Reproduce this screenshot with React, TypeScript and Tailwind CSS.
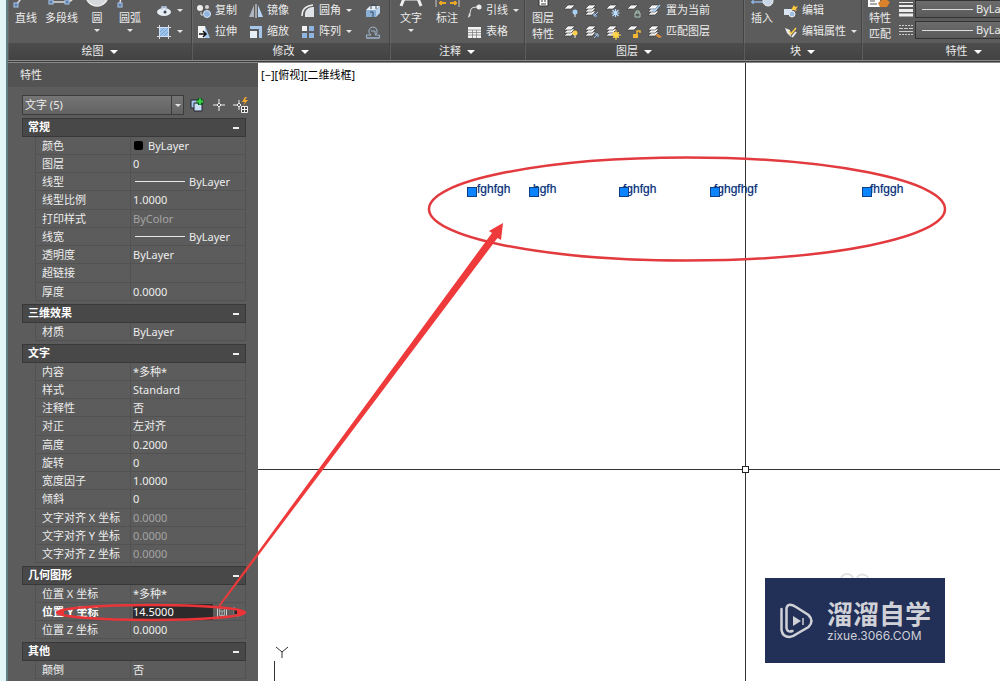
import { useState } from "react";
import type { ReactNode } from "react";

type Property = {
  name: string;
  value: string;
  kind?: "swatch" | "line" | "edit";
  readOnly?: boolean;
};

type Section = {
  title: string;
  rows: Property[];
};

const SECTIONS: Section[] = [
  {
    title: "常规",
    rows: [
      { name: "颜色", value: "ByLayer", kind: "swatch" },
      { name: "图层", value: "0" },
      { name: "线型", value: "ByLayer", kind: "line" },
      { name: "线型比例", value: "1.0000" },
      { name: "打印样式", value: "ByColor", readOnly: true },
      { name: "线宽", value: "ByLayer", kind: "line" },
      { name: "透明度", value: "ByLayer" },
      { name: "超链接", value: "" },
      { name: "厚度", value: "0.0000" },
    ],
  },
  { title: "三维效果", rows: [{ name: "材质", value: "ByLayer" }] },
  {
    title: "文字",
    rows: [
      { name: "内容", value: "*多种*" },
      { name: "样式", value: "Standard" },
      { name: "注释性", value: "否" },
      { name: "对正", value: "左对齐" },
      { name: "高度", value: "0.2000" },
      { name: "旋转", value: "0" },
      { name: "宽度因子", value: "1.0000" },
      { name: "倾斜", value: "0" },
      { name: "文字对齐 X 坐标", value: "0.0000", readOnly: true },
      { name: "文字对齐 Y 坐标", value: "0.0000", readOnly: true },
      { name: "文字对齐 Z 坐标", value: "0.0000", readOnly: true },
    ],
  },
  {
    title: "几何图形",
    rows: [
      { name: "位置 X 坐标", value: "*多种*" },
      { name: "位置 Y 坐标", value: "14.5000", kind: "edit" },
      { name: "位置 Z 坐标", value: "0.0000" },
    ],
  },
  { title: "其他", rows: [{ name: "颠倒", value: "否" }] },
];

// Text entities on the drawing, in canvas coordinates
const ENTITIES = [
  { text: "fghfgh", grip: 209, x: 219 },
  { text: "hgfh", grip: 271, x: 275 },
  { text: "fghfgh", grip: 361, x: 365 },
  { text: "fghgfhgf", grip: 452, x: 456 },
  { text: "fhfggh", grip: 604, x: 612 },
];

function Icon({ children }: { children: ReactNode }) {
  return (
    <svg viewBox="0 0 16 16" className="h-4 w-4 shrink-0" fill="none" aria-hidden="true">
      {children}
    </svg>
  );
}

function Caret() {
  return <span className="border-x-[3px] border-t-[3px] border-x-transparent border-t-[#e4e4e4]" />;
}

function Sheets({ count = 3, children }: { count?: number; children?: ReactNode }) {
  return (
    <Icon>
      {count > 2 && <path d="M1 12h7l4-4H5z" fill="#eee" stroke="#333" strokeWidth=".6" />}
      {count > 1 && <path d="M1 9h7l4-4H5z" fill="#eee" stroke="#333" strokeWidth=".6" />}
      <path d="M1 6h7l4-4H5z" fill="#f6f6f6" stroke="#333" strokeWidth=".6" />
      {children}
    </Icon>
  );
}

function SmallTool({ icon, label, caret = false }: { icon: ReactNode; label?: string; caret?: boolean }) {
  return (
    <button type="button" className="flex h-[21px] items-center gap-[3px] whitespace-nowrap">
      {icon}
      {label}
      {caret && (
        <span className="ml-[2px] flex">
          <Caret />
        </span>
      )}
    </button>
  );
}

function BigTool({ icon, lines, caret = false }: { icon: ReactNode; lines: string[]; caret?: boolean }) {
  return (
    <button type="button" className="flex shrink-0 flex-col items-center whitespace-nowrap">
      <svg viewBox="0 0 28 10" className="h-[10px] w-7" fill="none" aria-hidden="true">
        {icon}
      </svg>
      {lines.map((line) => (
        <span key={line} className="leading-4">
          {line}
        </span>
      ))}
      {caret && (
        <span className="mt-[3px] flex">
          <Caret />
        </span>
      )}
    </button>
  );
}

function RibbonGroup({ title, className, children }: { title: string; className: string; children: ReactNode }) {
  return (
    <section className={`flex shrink-0 flex-col border-r border-[#444] ${className}`}>
      <div className="flex h-[43px] items-start overflow-hidden bg-[#5c5c5c] shadow-[inset_1px_0_0_#6a6a6a]">
        {children}
      </div>
      <button
        type="button"
        className="flex h-[17px] items-center justify-center gap-[6px] bg-linear-to-b from-[#4c4c4c] to-[#434343] shadow-[inset_1px_0_0_#5c5c5c]"
      >
        {title}
        <span className="border-x-4 border-t-4 border-x-transparent border-t-white" />
      </button>
    </section>
  );
}

function StyleSelect({ label }: { label: string }) {
  return (
    <div className="relative h-[18px] w-[148px] border border-[#333] bg-linear-to-b from-[#6c6c6c] to-[#5a5a5a]">
      <span className="pointer-events-none absolute top-2 left-[6px] h-px w-[51px] bg-[#ddd]" />
      <select aria-label={label} className="h-4 w-full appearance-none bg-transparent pl-[60px] leading-4 outline-none">
        <option>ByLayer</option>
      </select>
    </div>
  );
}

function Ribbon() {
  return (
    <header className="flex h-[63px] overflow-hidden border-b-3 border-double border-[#8a8a8a] bg-[#3d3d3d]">
      <RibbonGroup title="绘图" className="w-[184px]">
        <div className="flex gap-[5px] pl-1">
          <BigTool
            lines={["直线"]}
            icon={
              <>
                <path d="M4 5 12-5" stroke="#ddd" strokeWidth="1.5" />
                <rect x="2" y="3" width="4" height="4" fill="#5b7fae" stroke="#a9c6ea" />
              </>
            }
          />
          <BigTool
            lines={["多段线"]}
            icon={
              <>
                <path d="M3 2h15q9-1 5-6" stroke="#ddd" strokeWidth="1.5" />
                <rect x="1" y="0" width="4" height="4" fill="#5b7fae" stroke="#a9c6ea" />
                <rect x="17" y="0" width="4" height="4" fill="#5b7fae" stroke="#a9c6ea" />
              </>
            }
          />
          <BigTool lines={["圆"]} caret icon={<circle cx="14" cy="-5" r="11" fill="#d5d8dd" stroke="#eee" strokeWidth="1.5" />} />
          <BigTool
            lines={["圆弧"]}
            caret
            icon={
              <>
                <path d="M4 4q0-8 8-12" stroke="#ddd" strokeWidth="1.5" />
                <rect x="2" y="3" width="4" height="4" fill="#5b7fae" stroke="#a9c6ea" />
              </>
            }
          />
        </div>
        <div className="pl-3">
          <SmallTool
            caret
            icon={
              <Icon>
                <ellipse cx="8" cy="9" rx="7" ry="4" fill="#e8edf3" />
                <circle cx="9" cy="9" r="1.500" fill="#345" />
                <path d="M6 7V4h4v3" stroke="#b9cfe8" strokeWidth="1.500" />
              </Icon>
            }
          />
          <SmallTool
            caret
            icon={
              <Icon>
                <rect x="3.5" y="3.5" width="9" height="9" fill="#9cc3ec" stroke="#cfe2f7" />
                <path d="m4 8 4-4M4 12l8-8M8 12l4-4" stroke="#6f97c4" strokeWidth=".7" />
                <path d="M1 3.5h2m10 0h2M1 12.5h2m10 0h2M3.5 1v2m9-2v2m-9 10v2m9-2v2" stroke="#ddd" />
              </Icon>
            }
          />
        </div>
      </RibbonGroup>

      <RibbonGroup title="修改" className="w-[198px]">
        <div className="w-[52px] pl-1">
          <SmallTool
            label="复制"
            icon={
              <Icon>
                <circle cx="4" cy="5" r="3" fill="#eee" />
                <circle cx="11" cy="4" r="2" fill="#d5d5d5" />
                <circle cx="11" cy="11" r="3.5" fill="#8fb4e0" stroke="#dce9f8" />
                <path d="M5 9v3h2" stroke="#ddd" />
              </Icon>
            }
          />
          <SmallTool
            label="拉伸"
            icon={
              <Icon>
                <path d="M2 2h7v12H2z" fill="#f4f4f4" />
                <path d="m9 2 5 12H9z" fill="#a5caf0" />
                <path d="M3 10h7M7 7l3 3-3 3" stroke="#111" strokeWidth="1.500" />
              </Icon>
            }
          />
        </div>
        <div className="w-[52px] pl-1">
          <SmallTool
            label="镜像"
            icon={
              <Icon>
                <path d="M6 2v12H1z" fill="#aeb6c0" />
                <path d="M10 2v12h5z" fill="#b5d4f5" />
                <path d="M8 1v14" stroke="#eee" />
              </Icon>
            }
          />
          <SmallTool
            label="缩放"
            icon={
              <Icon>
                <path d="M2 2h12v12h-3V5H2z" fill="#a5c6ea" />
                <path d="M2 7h7v7H2z" fill="#e8eef5" />
              </Icon>
            }
          />
        </div>
        <div className="w-[65px] pl-1">
          <SmallTool
            label="圆角"
            caret
            icon={
              <Icon>
                <path d="M5 14V10q1-5 7-6h2v10z" fill="#dfe3e8" />
                <path d="M2 13q0-10 11-11" stroke="#eee" strokeWidth="1.500" />
              </Icon>
            }
          />
          <SmallTool
            label="阵列"
            caret
            icon={
              <Icon>
                <path d="M2 2h5v5H2z" fill="#f2f2f2" />
                <path d="M9 2h5v5H9zM2 9h5v5H2zM9 9h5v5H9z" fill="#8fb4e0" />
              </Icon>
            }
          />
        </div>
        <div className="pl-1">
          <SmallTool
            icon={
              <Icon>
                <path d="m1 7 4-4h10l-4 4z" fill="#e7eef6" />
                <path d="M1 7h10v7H1z" fill="#8aafd6" />
                <path d="m11 7 4-4v7l-4 4z" fill="#b9d2ec" />
                <path d="M6 6V2h5v4M5 9h3v5" stroke="#3b4a5b" />
              </Icon>
            }
          />
          <SmallTool
            icon={
              <Icon>
                <path d="M1.500 14h13M1.500 11H6Q3 9 4 6t4-3q3 0 4 3t-2 5h4.500v3h-13z" stroke="#9fb5cc" />
                <path d="M6 7h4v3" stroke="#9fb5cc" />
              </Icon>
            }
          />
        </div>
      </RibbonGroup>

      <RibbonGroup title="注释" className="w-[135px]">
        <div className="flex gap-2 pl-[7px]">
          <BigTool lines={["文字"]} caret icon={<path d="m4 6 8-20h4l8 20M8-1h12" stroke="#eee" strokeWidth="3" />} />
          <BigTool
            lines={["标注"]}
            icon={
              <>
                <path d="M3 0v7M26 0v7" stroke="#c9c9c9" />
                <path d="M6 3h7M17 3h7M8 1v4M22 1v4" stroke="#eda824" strokeWidth="2" />
              </>
            }
          />
        </div>
        <div className="pl-[6px]">
          <SmallTool
            label="引线"
            caret
            icon={
              <Icon>
                <path d="m2 14 2-8q1-2 6-2" stroke="#ddd" />
                <path d="m1 15 1-5 2 2z" fill="#ddd" />
                <circle cx="12" cy="4" r="2.500" fill="#eee" />
              </Icon>
            }
          />
          <SmallTool
            label="表格"
            icon={
              <Icon>
                <path d="M1 3h13v11H1z" fill="#f3f3f3" />
                <path d="M1 6h13M1 8.500h13M1 11h13M5.500 6v8m4-8v8" stroke="#777" strokeWidth=".7" />
              </Icon>
            }
          />
        </div>
      </RibbonGroup>

      <RibbonGroup title="图层" className="w-[219px]">
        <div className="pl-1">
          <BigTool
            lines={["图层", "特性"]}
            icon={
              <>
                <path d="M10-2h9v8h-9z" fill="#fff" stroke="#333" />
                <path d="M12 1h2m1 0h2m-5 3h5" stroke="#333" />
              </>
            }
          />
        </div>
        <div className="flex gap-[5px] pl-[6px]">
          <div>
            <SmallTool icon={<Sheets count={1}><circle cx="12" cy="9" r="2.500" fill="#a7d0f7" /><path d="M12 11v3" stroke="#eee" /></Sheets>} />
            <SmallTool icon={<Sheets><circle cx="12" cy="9" r="2.500" fill="#ffd04a" /><path d="M12 11v3" stroke="#eee" /></Sheets>} />
          </div>
          <div>
            <SmallTool icon={<Sheets><path d="m14 9-4 4m0-3v3h3" stroke="#9ec9f5" /></Sheets>} />
            <SmallTool icon={<Sheets><path d="m10 14 4-4m-3 0h3v3" stroke="#9ec9f5" /></Sheets>} />
          </div>
          <div>
            <SmallTool icon={<Sheets count={1}><path d="M10.500 6v8m-4-4h8m-7-3 6 6m0-6-6 6" stroke="#b9dcff" strokeWidth="1.200" /></Sheets>} />
            <SmallTool icon={<Sheets><circle cx="11" cy="11" r="3" fill="#ffd94a" /><path d="M11 6v10m-5-5h10m-8-3 6 6m0-6-6 6" stroke="#ffd04a" /></Sheets>} />
          </div>
          <div>
            <SmallTool icon={<Sheets count={1}><path d="M9 10h5v4H9zM10 10V8h3v2" stroke="#a9c9b9" /></Sheets>} />
            <SmallTool icon={<Sheets count={1}><path d="M7 10h5v4H7z" fill="#f2b632" /><path d="M11 10V7h3v2" stroke="#f2b632" strokeWidth="1.500" /></Sheets>} />
          </div>
          <div>
            <SmallTool label="置为当前" icon={<Sheets><path d="m4 6 3 2 6-6" stroke="#9ec9f5" strokeWidth="1.500" /></Sheets>} />
            <SmallTool label="匹配图层" icon={<Sheets><path d="m8 11 3-1 4 3-3 1z" fill="#d98d3a" /></Sheets>} />
          </div>
        </div>
      </RibbonGroup>

      <RibbonGroup title="块" className="w-[118px]">
        <div className="pl-1">
          <BigTool
            lines={["插入"]}
            icon={
              <>
                <path d="M3 2h13M5-2v6" stroke="#8fb4e0" strokeWidth="1.5" />
                <circle cx="20" cy="1" r="5" fill="#c9d6e6" stroke="#eee" />
              </>
            }
          />
        </div>
        <div className="pl-[7px]">
          <SmallTool
            label="编辑"
            icon={
              <Icon>
                <path d="M1 6h8v6H1z" fill="#d9e4f1" />
                <circle cx="9" cy="11" r="3" fill="#9fbfe3" stroke="#eee" />
                <path d="m8 7 3-5 1 2 3-1-2 3 1 2-3-1z" fill="#ffc83d" />
              </Icon>
            }
          />
          <SmallTool
            label="编辑属性"
            caret
            icon={
              <Icon>
                <path d="m2 4 5 2 1 7-4-4z" fill="#eee" />
                <path d="m6 7 2 3 5-6" stroke="#ffd04a" strokeWidth="1.500" />
                <path d="m9 13 4-5" stroke="#eee" strokeWidth="2" />
              </Icon>
            }
          />
        </div>
      </RibbonGroup>

      <RibbonGroup title="特性" className="w-[204px]">
        <div className="pl-1">
          <BigTool
            lines={["特性", "匹配"]}
            icon={
              <>
                <path d="M2-2h12v9H2z" fill="#fff" />
                <path d="M4 1h5m-5 3h7" stroke="#555" />
                <path d="m12 3 6-5 6 4-3 5h-7z" fill="#d9822b" />
              </>
            }
          />
        </div>
        <div className="flex flex-col gap-[3px]">
          <div className="flex items-center gap-px pl-1">
            <Icon>
              <path d="M1 1.500h14" stroke="#eee" />
              <path d="M1 5h14" stroke="#eee" strokeWidth="2" />
              <path d="M1 9.500h14M1 14h14" stroke="#eee" strokeWidth="3" />
            </Icon>
            <StyleSelect label="线宽" />
          </div>
          <div className="flex items-center gap-px pl-1">
            <Icon>
              <path d="M1 3.500h14M1 12.500h14" stroke="#ccc" strokeDasharray="2 1" />
              <path d="M1 6.500h14" stroke="#ccc" strokeDasharray="4 1" />
              <path d="M1 9.500h14" stroke="#ccc" />
            </Icon>
            <StyleSelect label="线型" />
          </div>
        </div>
      </RibbonGroup>
    </header>
  );
}

function PropertyValue({ row }: { row: Property }) {
  const [value, setValue] = useState(row.value);

  if (row.kind === "edit") {
    return (
      <div className="flex items-center justify-between pr-[2px]">
        <input
          id={row.name}
          value={value}
          onChange={(e) => setValue(e.target.value)}
          className="h-4 w-20 bg-[#2d2a2c] leading-4 text-white outline-none"
        />
        <button type="button" aria-label="快速计算器">
          <svg viewBox="0 0 12 12" className="h-3 w-3" fill="none">
            <path d="M1.5 1v10M10.5 1v10" stroke="#ccc" />
            <path d="M3.5 2.5h5v7h-5zM3.5 5h5M6 5v4" stroke="#aaa" />
          </svg>
        </button>
        <button type="button" aria-label="拾取点">
          <svg viewBox="0 0 12 12" className="h-3 w-3">
            <path d="M3 1v9l2-2 2 3 1-1-1-3h3z" fill="#222" stroke="#bbb" strokeWidth=".5" />
          </svg>
        </button>
      </div>
    );
  }
  return (
    <div className="flex items-center">
      {row.kind === "swatch" && <span className="mr-[5px] ml-px h-[9px] w-[9px] rounded-xs bg-black" />}
      {row.kind === "line" && <span className="mr-1 ml-[2px] h-px w-[50px] bg-[#e8e8e8]" />}
      {value}
    </div>
  );
}

function PropertySection({ section }: { section: Section }) {
  const [open, setOpen] = useState(true);

  return (
    <section className="mb-[3px]">
      <button
        type="button"
        aria-expanded={open}
        onClick={() => setOpen(!open)}
        className="flex h-[19px] w-full items-center justify-between border border-[#383838] bg-[#484848] pr-[6px] pl-[5px] font-bold text-white"
      >
        {section.title}
        <span className="h-[2px] w-[6px] bg-[#eee]" />
      </button>
      {open && (
        <table className="w-full table-fixed border-separate border-spacing-0">
          <colgroup>
            <col className="w-[14px]" />
            <col className="w-[95px]" />
            <col />
          </colgroup>
          <tbody>
            {section.rows.map((row) => (
              <tr key={row.name} className="h-[18px] nth-[4n]:h-[19px]">
                <td className="border-r border-[#525252] p-0" />
                <th
                  scope="row"
                  className={`border-r border-b border-[#525252] p-0 pl-[6px] text-left leading-4 whitespace-nowrap ${
                    row.kind === "edit" ? "font-bold text-white" : "font-normal"
                  }`}
                >
                  {row.kind === "edit" ? <label htmlFor={row.name}>{row.name}</label> : row.name}
                </th>
                <td
                  className={`border-r border-b border-[#525252] p-0 pl-[2px] leading-4 ${
                    row.readOnly ? "text-[#a4a4a4]" : ""
                  }`}
                >
                  <PropertyValue row={row} />
                </td>
              </tr>
            ))}
          </tbody>
        </table>
      )}
    </section>
  );
}

function PropertiesPalette() {
  return (
    <aside className="w-[250px] shrink-0 bg-[#5c5c5c]">
      <h2 className="h-6 bg-[#535353] pl-3 leading-6">特性</h2>
      <div className="pt-2 pr-3 pl-[14px]">
        <div className="mb-[3px] flex h-5 items-center">
          <div className="relative h-5 w-[162px] shrink-0 border border-[#3c3c3c] bg-linear-to-b from-[#757575] to-[#626262]">
            <select
              aria-label="选择对象"
              className="h-[18px] w-full appearance-none bg-transparent pl-[2px] leading-4 outline-none"
            >
              <option>文字 (5)</option>
            </select>
            <span className="pointer-events-none absolute top-0 right-0 flex h-[18px] w-3 items-center justify-center border-l border-[#3c3c3c]">
              <Caret />
            </span>
          </div>
          <div className="flex shrink-0 gap-[6px] pl-[5px]">
            <button type="button" aria-label="切换 PICKADD">
              <Icon>
                <path d="M2 3h8v8H2z" fill="#a9c9ec" stroke="#223" />
                <path d="M5 6h8v8H5z" fill="#c9def5" stroke="#223" />
                <path d="M11 1v7M7.5 4.5h7" stroke="#0c5a18" strokeWidth="4" />
                <path d="M11 1.500v6M8 4.500h6" stroke="#3fd14c" strokeWidth="2" />
              </Icon>
            </button>
            <button type="button" aria-label="选择对象">
              <Icon>
                <path d="M8 2v4M8 10v4M2 8h4M10 8h4" stroke="#eee" />
                <path d="m8 6 2 2-2 2-2-2z" stroke="#eee" />
              </Icon>
            </button>
            <button type="button" aria-label="快速选择">
              <Icon>
                <path d="M6 3v4M6 10v3M0 8h4" stroke="#eee" />
                <path d="m6 6 2 2-2 2-2-2z" stroke="#eee" />
                <path d="m12 0-3 5h3l-2 4 5-6h-3l2-3z" fill="#f5a72c" />
                <path d="M8.5 9.5h6v6h-6zM8.5 12.5h6M11.5 9.5v6" fill="#444" stroke="#eee" />
              </Icon>
            </button>
          </div>
        </div>
        {SECTIONS.map((section) => (
          <PropertySection key={section.title} section={section} />
        ))}
      </div>
    </aside>
  );
}

function Brand() {
  return (
    <div className="absolute top-[515px] left-[507px] flex h-[85px] w-[180px] items-center gap-3 bg-[#222f57] pl-[14px] text-[#cfd1d6]">
      <svg viewBox="0 0 36 36" className="h-9 w-9 shrink-0" fill="none" stroke="currentColor" aria-hidden="true">
        <path d="M2.500 6v21q1 7 8 7 3 0 7-3l12-7q6-6 0-12L17 4Q9-1 7.500 5v20q1 5 6 3" strokeWidth="2.500" strokeLinecap="round" />
        <path d="m14 13 8 5-8 5z" fill="currentColor" stroke="none" />
        <path d="M24 15v7" strokeWidth="1.500" />
      </svg>
      <div className="flex flex-col gap-1">
        <p className="font-['Noto_Sans_CJK_SC',sans-serif] text-[26px] leading-[26px] font-bold whitespace-nowrap">
          溜溜自学
        </p>
        <p className="font-['Inter',sans-serif] text-xs leading-3 whitespace-nowrap">zixue.3066.COM</p>
      </div>
    </div>
  );
}

function DrawingCanvas() {
  return (
    <main className="relative min-w-0 flex-1 overflow-hidden bg-white text-black">
      <p className="pt-1 pl-[3px] leading-4">[−][俯视][二维线框]</p>
      {ENTITIES.map((entity) => (
        <span
          key={entity.x}
          className="absolute top-[118px] font-['Liberation_Sans',sans-serif] text-xs leading-4 text-[#0a2a6e] text-shadow-[0_0_1px_#7fa8e0]"
          style={{ left: entity.x }}
        >
          {entity.text}
        </span>
      ))}
      <svg className="absolute inset-0 h-full w-full" fill="none" aria-hidden="true">
        {ENTITIES.map((entity) => (
          <rect key={entity.grip} x={entity.grip + 0.5} y="124.5" width="9" height="9" fill="#0a84ff" stroke="#0f3f80" />
        ))}
        {/* crosshair and pick box */}
        <path d="M487.5 0v403M487.5 410v800M0 406.5h484M491 406.5h1600" stroke="#333" />
        <rect x="484.5" y="403.5" width="6" height="6" stroke="#222" />
        {/* UCS axis */}
        <path d="m18 584 6 5v6m0-6 6-5M16.5 598v30" stroke="#333" />
        <path d="M583 516a6 5 0 0 1 12 0M599 516a5 4 0 0 1 11 0" stroke="#e2e2e2" strokeWidth="2" />
      </svg>
      <Brand />
    </main>
  );
}

// Red markup drawn across the palette and the drawing
function Markup() {
  return (
    <svg className="pointer-events-none absolute inset-0 h-full w-full" fill="none" aria-hidden="true">
      <ellipse cx="687" cy="209" rx="258" ry="51.5" stroke="#e23a3e" strokeWidth="2.5" />
      <ellipse cx="151" cy="612.5" rx="94" ry="7.5" stroke="#ea3538" strokeWidth="2.5" />
      <path d="m57 612.500 7-3v6zM246 612.500l-9-3v6z" fill="#ea3538" />
      <path d="M218.5 605.5 492 233l-3-2 14-8-2 17-3.5-2L220 606.5z" fill="#ee3a3a" />
    </svg>
  );
}

export default function App() {
  return (
    <div className="relative flex h-screen overflow-hidden font-['Noto_Sans','Noto_Sans_CJK_SC',sans-serif] text-[11px] text-[#ececec]">
      <div className="w-2 shrink-0 border-r-2 border-[#5f7f80] bg-[#e2f6f7]" />
      <div className="flex min-w-0 flex-1 flex-col">
        <Ribbon />
        <div className="flex min-h-0 flex-1">
          <PropertiesPalette />
          <DrawingCanvas />
        </div>
      </div>
      <Markup />
    </div>
  );
}
